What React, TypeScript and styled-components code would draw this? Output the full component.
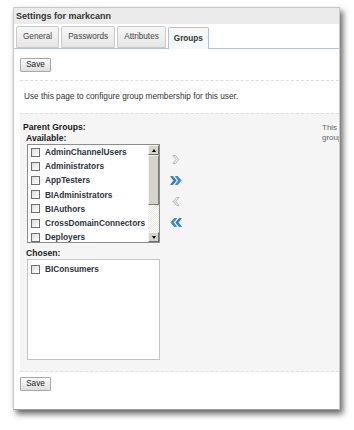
import React from "react";
import styled, { createGlobalStyle } from "styled-components";

const GlobalStyle = createGlobalStyle`
  html, body {
    margin: 0;
    padding: 0;
    background: #ffffff;
  }
  body {
    font-family: "Liberation Sans", Arial, sans-serif;
    color: #333;
  }
`;

const Page = styled.div`
  padding: 7px 0 0 13px;
  height: 430px;
  box-sizing: border-box;
`;

const Panel = styled.div`
  width: 327px;
  box-sizing: border-box;
  border: 1px solid #c9c9c9;
  border-bottom-color: #9d9d9d;
  background: #fff;
  overflow: hidden;
  box-shadow: 3px 4px 6px rgba(0, 0, 0, 0.6);
`;

const Header = styled.div`
  height: 16px;
  line-height: 16px;
  padding-left: 2px;
  background: #ebebeb;
  font-size: 9px;
  font-weight: bold;
  color: #333;
  white-space: nowrap;
`;

const TabBar = styled.div`
  display: flex;
  align-items: flex-end;
  gap: 2px;
  padding: 2px 0 0 2px;
  border-bottom: 1px solid #b2c6dc;
`;

const Tab = styled.div<{ $active?: boolean }>`
  height: ${(p) => (p.$active ? 21 : 20)}px;
  line-height: ${(p) => (p.$active ? 21 : 20)}px;
  padding: 0 ${(p) => (p.$active ? 5 : 6)}px;
  margin-bottom: ${(p) => (p.$active ? -1 : 0)}px;
  border: 1px solid ${(p) => (p.$active ? "#a9c2dd" : "#cacaca")};
  border-bottom: ${(p) => (p.$active ? "none" : "1px solid #cacaca")};
  border-radius: 2px 2px 0 0;
  background: ${(p) =>
    p.$active ? "#f6f9fc" : "linear-gradient(#f7f7f7, #e6e6e6)"};
  font-size: 8.2px;
  font-weight: ${(p) => (p.$active ? "bold" : "normal")};
  color: ${(p) => (p.$active ? "#333" : "#444")};
  white-space: nowrap;
`;

const Content = styled.div`
  padding-left: 6px;
`;

const ButtonRow = styled.div<{ $top: number; $bottom: number }>`
  padding: ${(p) => p.$top}px 0 ${(p) => p.$bottom}px;
`;

const Button = styled.button`
  display: block;
  height: 14px;
  width: 31px;
  padding: 0;
  border: 1px solid #a8a8a8;
  border-radius: 1px;
  background: linear-gradient(#fbfbfb, #dedede);
  font-family: "Liberation Sans", Arial, sans-serif;
  font-size: 8.2px;
  color: #222;
  line-height: 12px;
`;

const Intro = styled.div`
  border-top: 1px dashed #dcdcdc;
  padding: 11px 0 11px 4px;
  font-size: 8.25px;
  line-height: 10px;
  color: #333;
  white-space: nowrap;
`;

const GroupArea = styled.div`
  display: flex;
  background: #f5f5f5;
  border-top: 1px dashed #dedede;
  border-bottom: 1px dashed #dedede;
  padding: 8px 0 11px 3px;
`;

const Shuttle = styled.div`
  width: 299px;
  flex-shrink: 0;
`;

const Label = styled.div<{ $indent?: number; $gap?: number }>`
  padding-left: ${(p) => p.$indent ?? 0}px;
  margin-top: ${(p) => p.$gap ?? 0}px;
  font-size: 8.6px;
  font-weight: bold;
  line-height: 11px;
  color: #1a1a1a;
  white-space: nowrap;
`;

const ShuttleRow = styled.div`
  display: flex;
  align-items: flex-start;
  padding-left: 4px;
`;

const ListBox = styled.div<{ $height: number; $dark?: boolean }>`
  display: flex;
  width: 133px;
  height: ${(p) => p.$height}px;
  box-sizing: border-box;
  border: 1px solid ${(p) => (p.$dark ? "#8c8c8c" : "#c4c4c4")};
  background: #fff;
`;

const Items = styled.div<{ $top: number }>`
  flex: 1;
  min-width: 0;
  padding-top: ${(p) => p.$top}px;
  overflow: hidden;
`;

const Item = styled.div`
  display: flex;
  align-items: center;
  height: 14.2px;
  padding-left: 3px;
  font-size: 8.3px;
  font-weight: bold;
  color: #2b3440;
  white-space: nowrap;
`;

const Check = styled.span`
  width: 7px;
  height: 7px;
  margin-right: 5px;
  border: 1px solid #6f6f6f;
  background: linear-gradient(135deg, #dcdcdc, #ffffff);
  flex-shrink: 0;
`;

const ScrollBar = styled.div`
  display: flex;
  flex-direction: column;
  width: 11px;
  flex-shrink: 0;
  background: repeating-conic-gradient(#e9e7e2 0 25%, #ffffff 0 50%) 0 0 / 2px 2px;
`;

const ScrollButton = styled.div<{ $down?: boolean }>`
  height: 10px;
  box-sizing: border-box;
  border: 1px solid;
  border-color: #f4f3ef #6e6e6e #6e6e6e #f4f3ef;
  background: #d6d3cc;
  display: flex;
  align-items: center;
  justify-content: center;
  margin-top: ${(p) => (p.$down ? "auto" : "0")};
  &::after {
    content: "";
    border-left: 2.5px solid transparent;
    border-right: 2.5px solid transparent;
    ${(p) =>
      p.$down
        ? "border-top: 3px solid #000;"
        : "border-bottom: 3px solid #000;"}
  }
`;

const Thumb = styled.div`
  height: 50px;
  box-sizing: border-box;
  border: 1px solid;
  border-color: #f4f3ef #7a7a7a #7a7a7a #f4f3ef;
  background: #d6d3cc;
`;

const Arrows = styled.div`
  display: flex;
  flex-direction: column;
  gap: 12px;
  padding: 11px 0 0 10px;
`;

const HelpText = styled.div`
  padding-top: 1px;
  font-size: 8px;
  line-height: 10px;
  color: #666;
  white-space: nowrap;
`;

// one chevron ">" drawn as a thick bent bar, starting at dx
const chevron = (dx: number) =>
  `M${dx},0.5 L${dx + 2.4},0.5 L${dx + 5.6},4.5 L${dx + 2.4},8.5 L${dx},8.5 L${dx + 3.2},4.5 Z`;

function Chevron({ double, left }: { double?: boolean; left?: boolean }) {
  return (
    <svg
      width="12"
      height="9"
      viewBox="0 0 12 9"
      style={{ transform: left ? "scaleX(-1)" : undefined }}
    >
      {double ? (
        <>
          <path d={chevron(0.6)} fill="#2e7fe4" stroke="#1a5cb6" strokeWidth="0.6" strokeLinejoin="round" />
          <path d={chevron(5.4)} fill="#3d8ff2" stroke="#1a5cb6" strokeWidth="0.6" strokeLinejoin="round" />
        </>
      ) : (
        <path d={chevron(3)} fill="#f8f8f8" stroke="#a3a3a3" strokeWidth="0.8" strokeLinejoin="round" />
      )}
    </svg>
  );
}

const available = [
  "AdminChannelUsers",
  "Administrators",
  "AppTesters",
  "BIAdministrators",
  "BIAuthors",
  "CrossDomainConnectors",
  "Deployers",
];

export default function App() {
  return (
    <Page>
      <GlobalStyle />
      <Panel>
        <Header>Settings for markcann</Header>
        <TabBar>
          <Tab>General</Tab>
          <Tab>Passwords</Tab>
          <Tab>Attributes</Tab>
          <Tab $active>Groups</Tab>
        </TabBar>
        <Content>
          <ButtonRow $top={9} $bottom={8}>
            <Button>Save</Button>
          </ButtonRow>
          <Intro>Use this page to configure group membership for this user.</Intro>
          <GroupArea>
            <Shuttle>
              <Label>Parent Groups:</Label>
              <Label $indent={3}>Available:</Label>
              <ShuttleRow>
                <ListBox $height={99} $dark>
                  <Items $top={0}>
                    {available.map((name) => (
                      <Item key={name}>
                        <Check />
                        {name}
                      </Item>
                    ))}
                  </Items>
                  <ScrollBar>
                    <ScrollButton />
                    <Thumb />
                    <ScrollButton $down />
                  </ScrollBar>
                </ListBox>
                <Arrows>
                  <Chevron />
                  <Chevron double />
                  <Chevron left />
                  <Chevron double left />
                </Arrows>
              </ShuttleRow>
              <Label $indent={3} $gap={5}>
                Chosen:
              </Label>
              <ShuttleRow>
                <ListBox $height={101}>
                  <Items $top={2}>
                    <Item>
                      <Check />
                      BIConsumers
                    </Item>
                  </Items>
                </ListBox>
              </ShuttleRow>
            </Shuttle>
            <HelpText>
              This user is a member of the selected
              <br />
              groups.
            </HelpText>
          </GroupArea>
          <ButtonRow $top={5} $bottom={18}>
            <Button>Save</Button>
          </ButtonRow>
        </Content>
      </Panel>
    </Page>
  );
}
